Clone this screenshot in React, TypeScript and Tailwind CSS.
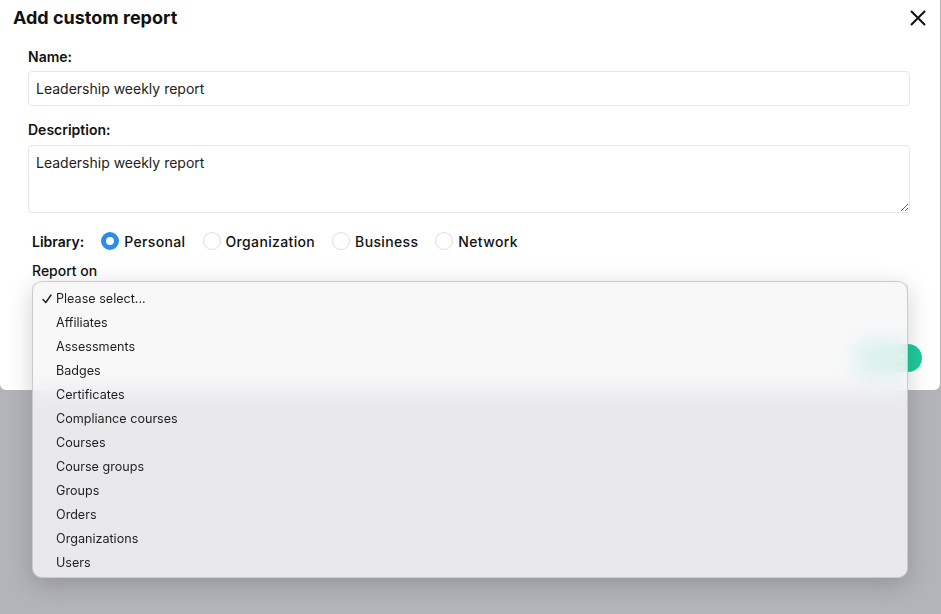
import React from "react";

const options = [
  "Please select...",
  "Affiliates",
  "Assessments",
  "Badges",
  "Certificates",
  "Compliance courses",
  "Courses",
  "Course groups",
  "Groups",
  "Orders",
  "Organizations",
  "Users",
];

const libraries = ["Personal", "Organization", "Business", "Network"];

function Radio({ checked, label }: { checked: boolean; label: string }) {
  return (
    <label className="flex items-center gap-[5px]">
      {checked ? (
        <span className="w-[18px] h-[18px] rounded-full border-[5px] border-[#2a8ee9] bg-white" />
      ) : (
        <span className="w-[18px] h-[18px] rounded-full border border-[#dedee4] bg-white" />
      )}
      <span className="text-[14px] font-medium tracking-[0.35px] text-[#111]">{label}</span>
    </label>
  );
}

export default function App() {
  return (
    <div
      className="relative w-[941px] h-[614px] overflow-hidden bg-[#b3b4ba]"
      style={{ fontFamily: "Inter, 'Open Sans', sans-serif" }}
    >
      {/* modal */}
      <div className="relative w-[940px] h-[390px] bg-white rounded-b-[6px]">
        <div className="flex items-start justify-between pl-[13px] pr-[14px] pt-[6px]">
          <h1 className="text-[18px] leading-[24px] font-bold text-[#111]">Add custom report</h1>
          <button className="mt-[4px]">
            <svg width="16" height="16" viewBox="0 0 16 16" fill="none">
              <path d="M1 1L15 15M15 1L1 15" stroke="#111" strokeWidth="2" />
            </svg>
          </button>
        </div>

        <div className="px-[28px]">
          <div className="mt-[17px] text-[14px] leading-[20px] font-semibold text-[#111]">Name:</div>
          <input
            className="mt-[4px] w-[882px] h-[35px] px-[7px] text-[14px] text-[#222] border border-[#e6e6ee] rounded-[4px] outline-none"
            defaultValue="Leadership weekly report"
          />

          <div className="mt-[14px] text-[14px] leading-[20px] font-semibold text-[#111]">Description:</div>
          <textarea
            className="mt-[5px] block w-[882px] h-[68px] px-[7px] py-[6px] text-[14px] text-[#222] border border-[#e6e6ee] rounded-[4px] outline-none"
            defaultValue="Leadership weekly report"
          />

          <div className="mt-[18px] pl-[4px] flex items-center h-[20px]">
            <span className="text-[14px] font-semibold text-[#111] mr-[17px]">Library:</span>
            <div className="flex items-center gap-[17px]">
              {libraries.map((l, i) => (
                <Radio key={l} checked={i === 0} label={l} />
              ))}
            </div>
          </div>

          <div className="mt-[10px] pl-[4px] text-[14px] leading-[20px] font-medium text-[#111]">Report on</div>
          <div className="mt-[2px] ml-[4px] w-[876px] h-[35px] border border-[#e6e6ee] rounded-[4px]" />

          <div className="flex justify-end mt-[26px]">
            <button className="w-[66px] h-[28px] -mr-[10px] rounded-full bg-[#1fcb9c] text-white text-[13px] font-semibold">
              Save
            </button>
          </div>
        </div>
      </div>

      {/* open select menu */}
      <div className="absolute left-[32px] top-[281px] w-[876px] h-[297px] rounded-[10px] border border-[#c9c9ce] bg-[#f6f6f8]/80 backdrop-blur-md shadow-[0_6px_24px_rgba(0,0,0,0.18)] pt-[5px] pb-[3px]">
        {options.map((o, i) => (
          <div key={o} className="flex items-center h-[24px] pl-[9px] text-[12.6px] text-[#1e1e1e]">
            <span className="w-[14px] flex items-center">
              {i === 0 && (
                <svg width="10" height="10" viewBox="0 0 10 10" fill="none">
                  <path d="M1 5.5L3.8 8.5L9 1" stroke="#1e1e1e" strokeWidth="1.4" strokeLinecap="round" strokeLinejoin="round" />
                </svg>
              )}
            </span>
            <span>{o}</span>
          </div>
        ))}
      </div>
    </div>
  );
}
